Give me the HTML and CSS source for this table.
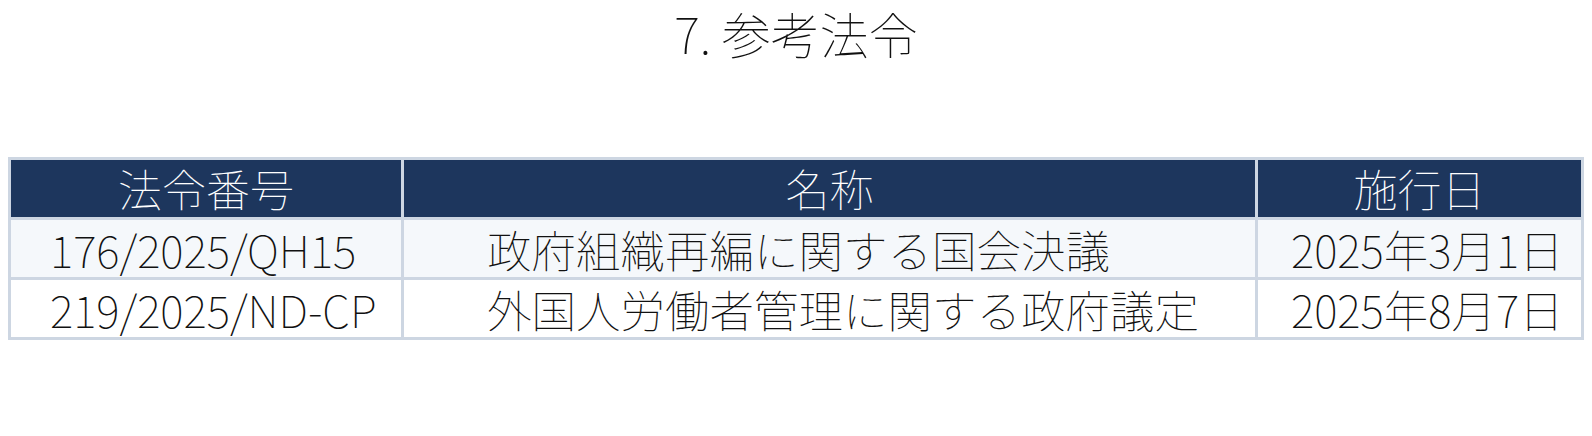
FILE: index.html
```html
<!DOCTYPE html>
<html>
<head>
<meta charset="utf-8">
<link rel="stylesheet" href="styles.css">
</head>
<body>
<h1 class="title">7. 参考法令</h1>
<div class="laws">
  <div class="cell head">法令番号</div>
  <div class="cell head">名称</div>
  <div class="cell head">施行日</div>

  <div class="cell odd c1">176/2025/QH15</div>
  <div class="cell odd c2">政府組織再編に関する国会決議</div>
  <div class="cell odd c3">2025年3月1日</div>

  <div class="cell c1">219/2025/ND-CP</div>
  <div class="cell c2">外国人労働者管理に関する政府議定</div>
  <div class="cell c3">2025年8月7日</div>
</div>
</body>
</html>
```
FILE: styles.css
```css
html, body {
  margin: 0;
  padding: 0;
  background: #ffffff;
}
body {
  font-family: "Noto Sans CJK JP", "Noto Sans", sans-serif;
  font-weight: 100;
  color: #111111;
  padding: 0 8px;
}
.title {
  margin: 0;
  padding-top: 1px;
  height: 157px;
  box-sizing: border-box;
  text-align: center;
  font-size: 49px;
  font-weight: 100;
  line-height: 64px;
  color: #111111;
}
.laws {
  box-sizing: border-box;
  display: grid;
  grid-template-columns: 390px 851px 1fr;
  grid-auto-rows: 57px;
  gap: 3px;
  border: 3px solid #cdd6e2;
  background: #cdd6e2;
}
.cell {
  background: #ffffff;
  font-size: 44.5px;
  font-weight: 100;
  line-height: 57px;
  white-space: nowrap;
}
.cell.head {
  background: #1d365d;
  color: #ffffff;
  text-align: center;
  font-size: 44px;
}
.cell.odd { background: #f5f8fb; }
.c1 { padding-left: 39px; }
.c2 { padding-left: 83px; }
.c3 { padding-left: 33px; }
```
